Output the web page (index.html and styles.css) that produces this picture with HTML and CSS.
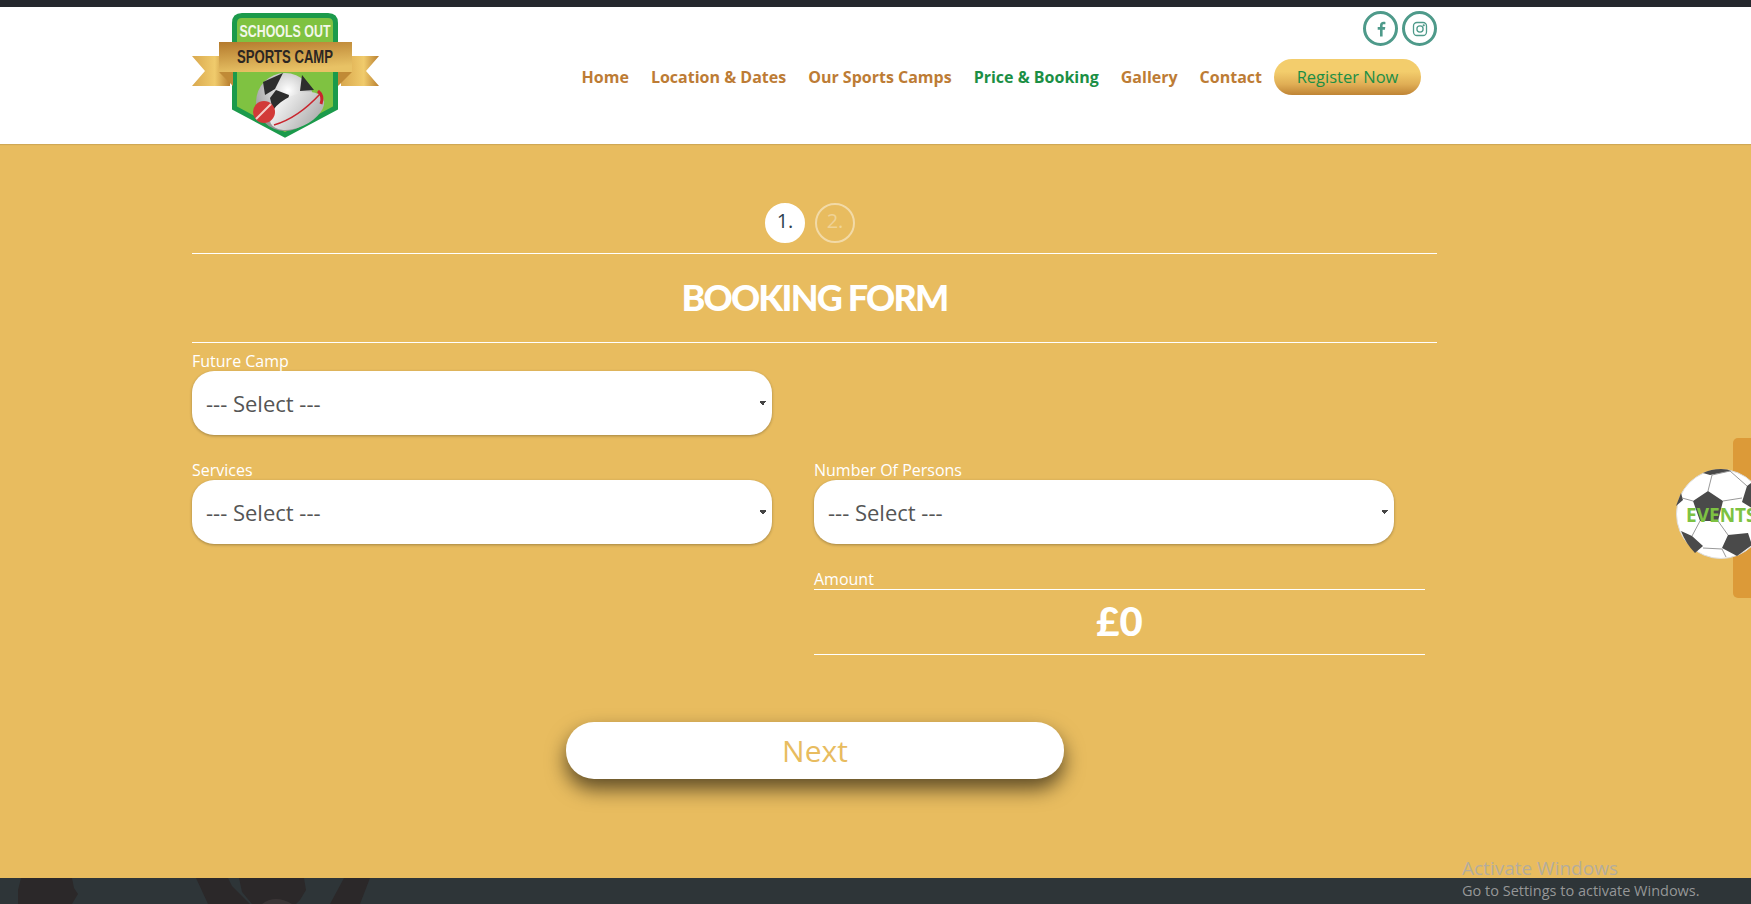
FILE: index.html
```html
<!DOCTYPE html>
<html lang="en">
<head>
    <meta charset="UTF-8">
    <title>Booking Form - Schools Out Sports Camp</title>
    <link rel="stylesheet" href="styles.css">
</head>
<body>
    <div class="topbar"></div>

    <header class="site-header">
        <a class="logo" href="#">
            <svg width="188" height="128" viewBox="0 0 188 128">
                <defs>
                    <linearGradient id="gold" x1="0" y1="0" x2="0.3" y2="1">
                        <stop offset="0" stop-color="#b47a2d"/>
                        <stop offset="1" stop-color="#e8c265"/>
                    </linearGradient>
                    <linearGradient id="tail" x1="0" y1="0" x2="1" y2="0">
                        <stop offset="0" stop-color="#d9a84e"/>
                        <stop offset="0.6" stop-color="#f0cb6c"/>
                        <stop offset="1" stop-color="#b97f30"/>
                    </linearGradient>
                    <radialGradient id="ball" cx="0.55" cy="0.3" r="0.75">
                        <stop offset="0" stop-color="#ffffff"/>
                        <stop offset="1" stop-color="#8a8a8a"/>
                    </radialGradient>
                    <linearGradient id="rugby" x1="0" y1="0" x2="1" y2="1">
                        <stop offset="0" stop-color="#ffffff"/>
                        <stop offset="1" stop-color="#a5a5a5"/>
                    </linearGradient>
                </defs>
                <path d="M0 44H38V74H0L13 59Z" fill="url(#tail)"/>
                <path d="M187 44H149V74H187L174 59Z" fill="url(#tail)"/>
                <path d="M50 3.500H136Q143.500 3.500 143.500 11V96L93 123L42.500 96V11Q42.500 3.500 50 3.500Z" fill="#7fc241" stroke="#1b9a4b" stroke-width="5"/>
                <text x="93" y="25" class="logo-top" text-anchor="middle" textLength="91" lengthAdjust="spacingAndGlyphs">SCHOOLS OUT</text>
                <path d="M27 30H160V60H27Z" fill="url(#gold)"/>
                <path d="M27 60H41V74ZM160 60H146V74Z" fill="#c08a36"/>
                <text x="93" y="51" class="logo-mid" text-anchor="middle" textLength="96" lengthAdjust="spacingAndGlyphs">SPORTS CAMP</text>
                <circle cx="93" cy="90" r="29" fill="url(#ball)"/>
                <path d="M84 78L97 83L95 95L81 98L78 86ZM71 70L91 61L83 77L73 83ZM110 63L122 78L108 79Z" fill="#2d2d2d"/>
                <ellipse cx="105" cy="99" rx="29" ry="16" fill="url(#rugby)" transform="rotate(-25 105 99)"/>
                <path d="M82 113Q106 106 128 82" fill="none" stroke="#c9252d" stroke-width="1.500"/>
                <path d="M126 79Q132 84 129 92" fill="none" stroke="#c9252d" stroke-width="3"/>
                <circle cx="72" cy="100" r="11" fill="#d23a38"/>
                <path d="M64 107Q72 99 79 92" fill="none" stroke="#f2d0cb" stroke-width="2"/>
            </svg>
        </a>
        <div class="header-right">
            <div class="social">
                <a class="social-link" href="#">
                    <svg width="14" height="16" viewBox="0 0 14 16"><path d="M8.6 15.5V8.7h2.3l.4-2.6H8.6V4.5c0-.8.3-1.3 1.4-1.3h1.4V.9C11 .8 10.300.7 9.500.7 7.400.7 6 2 6 4.200v1.900H3.700v2.600H6v6.800z" fill="#4e9a8a"/></svg>
                </a>
                <a class="social-link" href="#">
                    <svg width="16" height="16" viewBox="0 0 16 16" fill="none" stroke="#4e9a8a" stroke-width="1.300"><rect x="1.500" y="1.500" width="13" height="13" rx="3.500"/><circle cx="8" cy="8" r="3.100"/><circle cx="11.700" cy="4.300" r=".5" fill="#4e9a8a"/></svg>
                </a>
            </div>
            <nav class="main-nav">
                <a href="#">Home</a>
                <a href="#">Location &amp; Dates</a>
                <a href="#">Our Sports Camps</a>
                <a href="#" class="active">Price &amp; Booking</a>
                <a href="#">Gallery</a>
                <a href="#">Contact</a>
                <a href="#" class="register-btn">Register Now</a>
            </nav>
        </div>
    </header>

    <main class="booking">
        <div class="steps">
            <span class="step current">1.</span>
            <span class="step">2.</span>
        </div>

        <h1 class="form-title">BOOKING FORM</h1>

        <form class="form-grid">
            <div class="field">
                <label for="camp">Future Camp</label>
                <select id="camp"><option>--- Select ---</option></select>
            </div>
            <div></div>

            <div class="field">
                <label for="services">Services</label>
                <select id="services"><option>--- Select ---</option></select>
            </div>
            <div class="field">
                <label for="persons">Number Of Persons</label>
                <select id="persons"><option>--- Select ---</option></select>
            </div>

            <div></div>
            <div class="field amount-field">
                <label>Amount</label>
                <div class="amount">£0</div>
            </div>
        </form>

        <button type="button" class="next-btn">Next</button>
    </main>

    <footer class="photo-strip">
        <svg width="400" height="26" viewBox="0 0 400 26">
            <path d="M18 26V12L21 0H72L74 10L78 16L72 26Z" fill="#2b2829"/>
            <path d="M196 0H228L232 8L250 26H208ZM239 0H304L306 12L300 22L296 26H252L242 14ZM330 26L344 0H370L360 26Z" fill="#2b2829"/>
            <path d="M262 26Q275 16 292 26Z" fill="#3a3536"/>
        </svg>
    </footer>

    <aside class="events-tab">
        <span class="tab-bar"></span>
        <span class="events-ball">
            <svg width="90" height="90" viewBox="0 0 90 90">
                <circle cx="45" cy="45" r="44.500" fill="#fff" stroke="#ddd" stroke-width="1"/>
                <path d="M17 32L32 22L47 32L42 52H24ZM46 79L52 66L72 64L76 76L61 87ZM5 62L16 67L27 77L19 84Q10 75 5 62ZM71 17L66 33L76 39L90 34V20L80 10ZM27 4Q35 0 45 0Q52 0 55 2L34 6ZM0 37L5 24L7 31Z" fill="#4a4a4a"/>
                <path d="M36 6L32 22M17 32L6 29M47 32L66 29M36 6L54 2L71 17M24 52L16 67M42 52L52 66M27 79L46 80M46 80L50 88" fill="none" stroke="#999" stroke-width="1"/>
            </svg>
        </span>
        <span class="events-label">EVENTS</span>
    </aside>

    <div class="activate">
        <p class="activate-title">Activate Windows</p>
        <p class="activate-sub">Go to Settings to activate Windows.</p>
    </div>
</body>
</html>
```

FILE: styles.css
```css
html, body {
    margin: 0;
    height: 904px;
    overflow: hidden;
}

body {
    position: relative;
    background: #e8bc5f;
    font-family: "Open Sans", sans-serif;
    color: #fff;
}

a {
    text-decoration: none;
}

.topbar {
    height: 7px;
    background: #25282d;
}

.site-header {
    display: flex;
    justify-content: space-between;
    height: 137px;
    padding: 5px 314px 0 192px;
    box-sizing: border-box;
    background: #fff;
    box-shadow: 0 1px 1px rgba(0,0,0,0.1);
    position: relative;
}

.logo {
    display: block;
    height: 128px;
}

.logo-top {
    font: bold 17px "Liberation Sans", sans-serif;
    fill: #f3f7ea;
}

.logo-mid {
    font: bold 18px "Liberation Sans", sans-serif;
    fill: #2c2622;
}

.header-right {
    display: flex;
    flex-direction: column;
    align-items: flex-end;
}

.social {
    display: flex;
    gap: 4px;
    margin-top: -1px;
}

.social-link {
    display: flex;
    align-items: center;
    justify-content: center;
    width: 35px;
    height: 35px;
    box-sizing: border-box;
    border: 3px solid #4e9a8a;
    border-radius: 50%;
}

.main-nav {
    display: flex;
    align-items: center;
    gap: 22px;
    margin: 13px 16px 0 0;
    font-size: 16px;
    font-weight: 700;
}

.main-nav a {
    color: #bd7c35;
}

.main-nav a.active {
    color: #1b8f45;
}

.main-nav .register-btn {
    display: block;
    width: 147px;
    height: 36px;
    margin-left: -10px;
    line-height: 36px;
    text-align: center;
    font-size: 16.500px;
    font-weight: 500;
    color: #1b8f45;
    border-radius: 18px;
    background: linear-gradient(#f3cd6c 35%, #e0ae55 70%, #bf8435);
}

.booking {
    height: 734px;
    padding: 59px 314px 0 192px;
    box-sizing: border-box;
    text-align: center;
}

.steps {
    display: flex;
    justify-content: center;
    gap: 10px;
    margin-bottom: 10px;
    padding-right: 9px;
}

.step {
    width: 40px;
    height: 40px;
    box-sizing: border-box;
    border: 2px solid rgba(255,255,255,0.45);
    border-radius: 50%;
    font-size: 20px;
    line-height: 31px;
    color: rgba(255,255,255,0.35);
}

.step.current {
    background: #fff;
    border-color: #fff;
    color: #2c3e50;
}

.form-title {
    height: 90px;
    margin: 0;
    box-sizing: border-box;
    border-top: 1px solid #fff;
    border-bottom: 1px solid #fff;
    font-family: "Lato", sans-serif;
    font-size: 36px;
    font-weight: 900;
    letter-spacing: -1.800px;
    line-height: 86px;
}

.form-grid {
    display: grid;
    grid-template-columns: 622px 623px;
    row-gap: 25px;
    text-align: left;
}

.field label {
    display: block;
    height: 20px;
    margin-top: 8px;
    font-size: 16px;
    line-height: 20px;
}

.form-grid .field:nth-child(n+3) label {
    margin-top: 0;
}

.field select {
    display: block;
    width: 580px;
    height: 64px;
    padding-left: 14px;
    border: none;
    border-radius: 22px;
    appearance: none;
    background-color: #fff;
    background-image: linear-gradient(45deg, transparent 50%, #444 50%), linear-gradient(-45deg, transparent 50%, #444 50%);
    background-size: 3px 5px, 3px 5px;
    background-position: right 9px center, right 6px center;
    background-repeat: no-repeat;
    box-shadow: 0 1px 3px rgba(0,0,0,0.3);
    font-family: "Open Sans", sans-serif;
    font-size: 22px;
    color: #555;
}

.amount-field {
    width: 611px;
}

.amount {
    height: 66px;
    box-sizing: border-box;
    border-top: 1px solid #fff;
    border-bottom: 1px solid #fff;
    text-align: center;
    font-family: "Lato", sans-serif;
    font-size: 40px;
    font-weight: 900;
    line-height: 62px;
}

.next-btn {
    display: block;
    width: 498px;
    height: 57px;
    margin: 67px 0 0 374px;
    border: none;
    border-radius: 28px;
    background: #fff;
    box-shadow: 0 10px 20px rgba(0,0,0,0.6);
    font-family: "Open Sans", sans-serif;
    font-size: 30px;
    color: #e8bc5f;
}

.photo-strip {
    height: 26px;
    background: #2e3538;
}

.photo-strip svg {
    display: block;
}

/* floating events tab on the right edge */
.events-tab {
    position: absolute;
    top: 438px;
    left: 1676px;
    width: 75px;
    height: 160px;
    overflow: hidden;
}

.tab-bar {
    position: absolute;
    top: 0;
    left: 57px;
    width: 30px;
    height: 160px;
    border-radius: 5px;
    background: #dc9a38;
}

.events-ball {
    position: absolute;
    top: 31px;
    left: 0;
}

.events-ball svg {
    display: block;
}

.events-label {
    position: absolute;
    top: 65px;
    left: 10px;
    font-size: 19px;
    font-weight: 700;
    line-height: 24px;
    color: #7dc242;
}

.activate {
    position: absolute;
    top: 855px;
    left: 1462px;
    color: rgba(170,170,170,0.85);
}

.activate p {
    margin: 0;
}

.activate-title {
    font-size: 19px;
    line-height: 26px;
}

.activate-sub {
    font-size: 14.500px;
    line-height: 20px;
}
```
